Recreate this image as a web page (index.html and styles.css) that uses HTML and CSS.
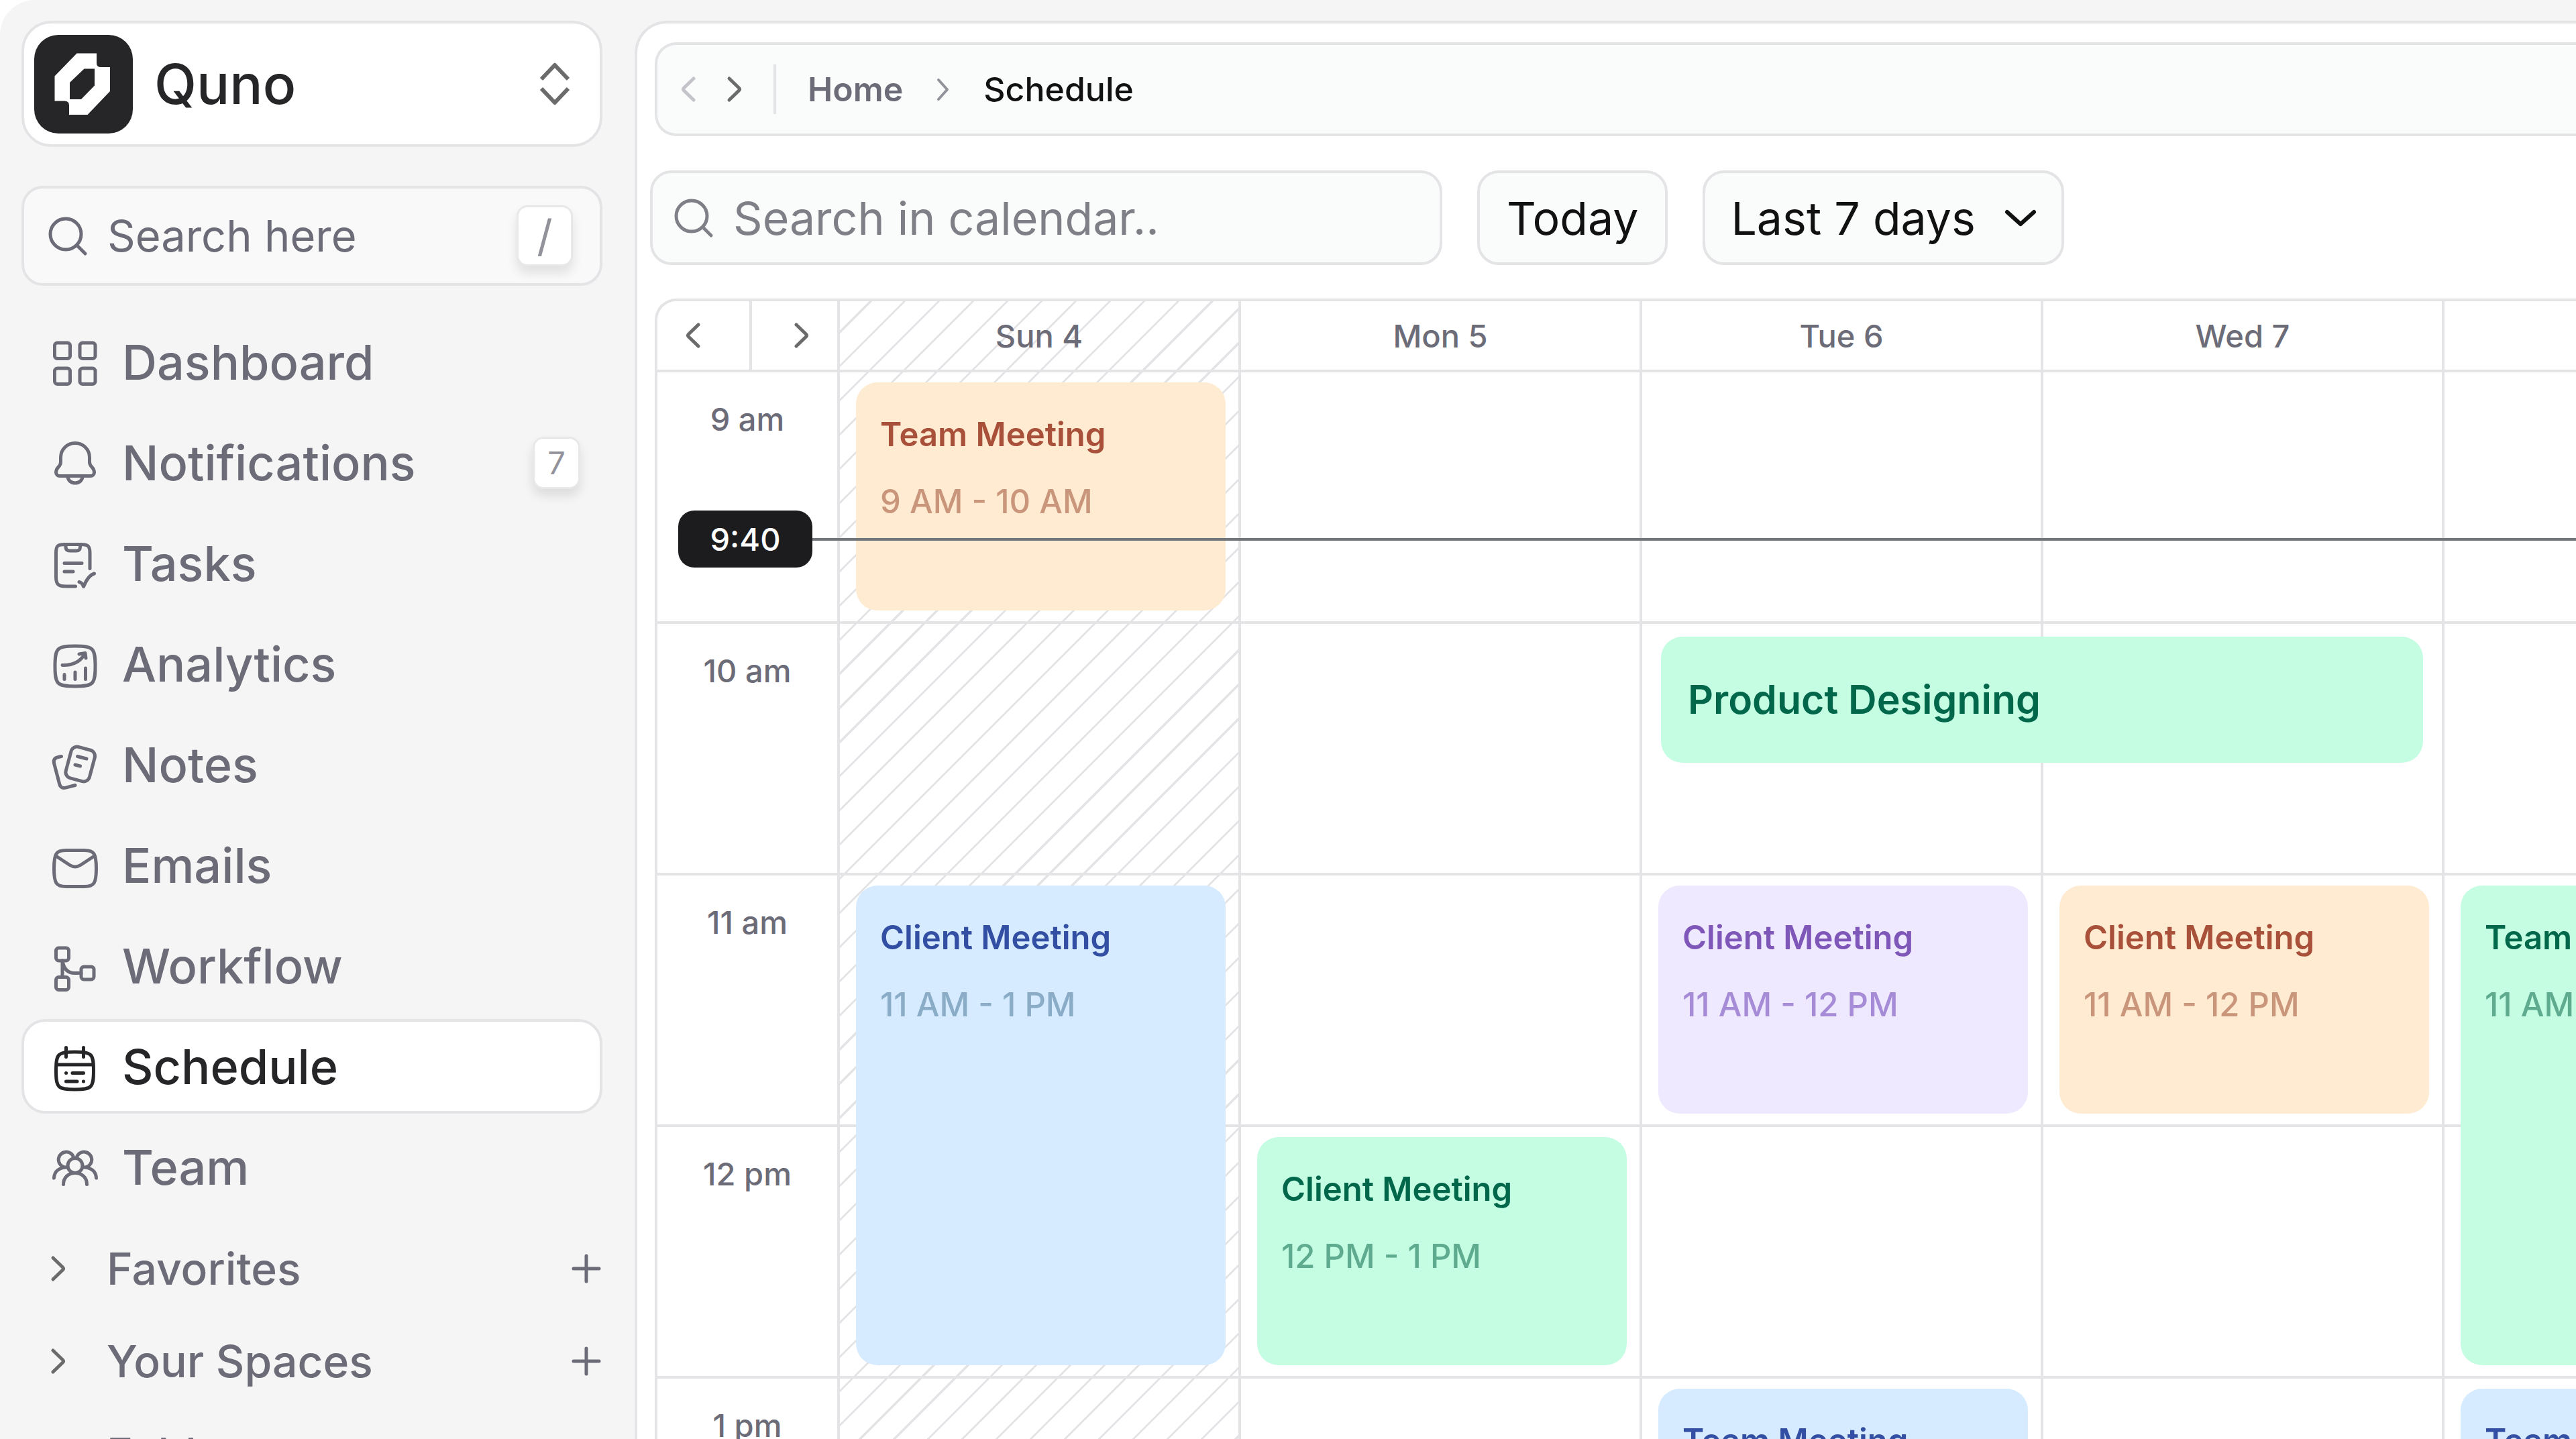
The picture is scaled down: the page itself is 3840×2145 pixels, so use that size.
FILE: index.html
```html
<!DOCTYPE html>
<html lang="en">
<head>
  <meta charset="UTF-8">
  <title>Quno - Schedule</title>
  <link rel="stylesheet" href="styles.css">
</head>
<body>

  <div class="app">

    <aside class="sidebar">
      <button class="workspace" type="button">
        <svg class="logo" viewBox="0 0 147 147">
          <rect width="147" height="147" rx="36" fill="#262628"/>
          <path fill="#fff" fill-rule="evenodd" d="M63.500 27.500H93V42Q93 48 99 48H113V84L79.500 119H52V105Q52 98.500 45.500 98.500H30.500V61.500ZM74.500 50.500L53 71V96H70L90 75.500V50.500Z"/>
        </svg>
        <span class="workspace-name">Quno</span>
        <svg class="updown" viewBox="0 0 46 64"><path d="M3 25L23 4L43 25M3 39L23 60L43 39"/></svg>
      </button>

      <label class="side-search">
        <svg class="search-icon" viewBox="0 0 58 58"><circle cx="26" cy="26" r="23"/><path d="M42.500 42.500L55 55"/></svg>
        <input type="text" placeholder="Search here" aria-label="Search here">
        <kbd>/</kbd>
      </label>

      <nav class="menu">
        <a href="#">
          <svg viewBox="0 0 72 72"><rect x="5.500" y="7" width="23" height="23.500" rx="4"/><rect x="43" y="7" width="23" height="23.500" rx="4"/><rect x="5.500" y="45" width="23" height="23.500" rx="4"/><rect x="43" y="45" width="23" height="23.500" rx="4"/></svg>
          Dashboard
        </a>
        <a href="#">
          <svg viewBox="0 0 72 72"><path d="M36 6.500C24 6.500 14.500 16 14.500 28V35C14.500 42 7.500 42 7.500 50C7.500 53 10 55.500 13 55.500H59C62 55.500 64.500 53 64.500 50C64.500 42 57.500 42 57.500 35V28C57.500 16 48 6.500 36 6.500ZM25 56C25 62 30 66 36 66S47 62 47 56"/></svg>
          Notifications
          <span class="count">7</span>
        </a>
        <a href="#">
          <svg viewBox="0 0 72 72"><path d="M36.500 70H22C11 70 7.500 67 7.500 56V20C7.500 10 10 7.500 20 7.500H45C55 7.500 58 10 58 20V43.500M22 8V11C22 15 24 17 28 17H38C42 17 43.500 15 43.500 11V8M20 35.500H46M20 48H33M42 63.500C45 64 47 66 48.500 70.500C52 62 57 53 64.500 51"/></svg>
          Tasks
        </a>
        <a href="#">
          <svg viewBox="0 0 72 72"><path d="M36 9C9 9 6 12 6 39S9 69 36 69S66 66 66 39S63 9 36 9ZM17 37.500C33 38 44 32 50.500 20.500M42 21L51 19.500L52 27M20 51.500V58.500M36 48V58.500M51.500 42V58.500"/></svg>
          Analytics
        </a>
        <a href="#">
          <svg viewBox="0 0 72 72"><rect x="25.500" y="11" width="36.500" height="48" rx="9" transform="rotate(15 43.700 35)"/><path d="M15.500 23.500L11 24.500C6 25.500 3.500 28.500 4.500 33.500L12.500 64C13.500 69 17 71.500 22 70.200L36 66.500M39.500 23.500L53 27M36 36L43.500 38"/></svg>
          Notes
        </a>
        <a href="#">
          <svg viewBox="0 0 72 72"><path d="M22 13.500H50C64 13.500 67.500 18 67.500 40.500S64 67.500 50 67.500H22C8 67.500 4.500 63 4.500 40.500S8 13.500 22 13.500ZM7.500 22L28 35.500Q36 40.500 44 35.500L64.500 22"/></svg>
          Emails
        </a>
        <a href="#">
          <svg viewBox="0 0 72 72"><rect x="7.500" y="9" width="19" height="19" rx="4"/><rect x="7.500" y="52.500" width="19" height="19" rx="4"/><rect x="45" y="37" width="19" height="19" rx="4"/><path d="M17 28V52.500M17 28C19 40 25 46.500 35 46.500H45"/></svg>
          Workflow
        </a>
        <a href="#" class="active">
          <svg viewBox="0 0 72 72"><path d="M35.500 14C10 14 7.500 17 7.500 42S10 70 35.500 70S63.500 67 63.500 42S61 14 35.500 14ZM8 33H63M22.500 7.500V21.500M48.500 7.500V21.500M22.500 45.500H22.600M32 45.500H48.500M22.500 58H39M48.400 58H48.500"/></svg>
          Schedule
        </a>
        <a href="#">
          <svg viewBox="0 0 72 72"><circle cx="36" cy="33.500" r="11"/><path d="M33.800 21.500A11.500 11.500 0 1 0 24.500 36M38.200 21.500A11.500 11.500 0 1 1 47.500 36M4.500 52C5 42 12 36 25 36M67.500 52C67 42 60 36 47 36M18.500 61.500C18.500 51 26 44.500 36 44.500S53.500 51 53.500 61.500"/></svg>
          Team
        </a>
      </nav>

      <div class="groups">
        <div class="group">
          <button class="group-toggle" type="button"><svg class="chevron" viewBox="0 0 22 38"><path d="M3 3L17.500 17Q19.500 19 17.500 21L3 35"/></svg>Favorites</button>
          <button class="add" type="button" aria-label="Add favorite"><svg viewBox="0 0 44 44"><path d="M22 3V41M3 22H41"/></svg></button>
        </div>
        <div class="group">
          <button class="group-toggle" type="button"><svg class="chevron" viewBox="0 0 22 38"><path d="M3 3L17.500 17Q19.500 19 17.500 21L3 35"/></svg>Your Spaces</button>
          <button class="add" type="button" aria-label="Add space"><svg viewBox="0 0 44 44"><path d="M22 3V41M3 22H41"/></svg></button>
        </div>
        <div class="group">
          <button class="group-toggle" type="button"><svg class="chevron" viewBox="0 0 22 38"><path d="M3 3L17.500 17Q19.500 19 17.500 21L3 35"/></svg>Folders</button>
        </div>
      </div>
    </aside>

    <main class="panel">
      <nav class="breadcrumb">
        <button type="button" aria-label="Back" disabled><svg class="chevron" viewBox="0 0 22 38"><path d="M19 3L4.500 17Q2.500 19 4.500 21L19 35"/></svg></button>
        <button type="button" aria-label="Forward"><svg class="chevron" viewBox="0 0 22 38"><path d="M3 3L17.500 17Q19.500 19 17.500 21L3 35"/></svg></button>
        <span class="divider"></span>
        <a href="#">Home</a>
        <svg class="separator" viewBox="0 0 18 33"><path d="M2 2L15 16.500L2 31"/></svg>
        <span class="current">Schedule</span>
      </nav>

      <div class="toolbar">
        <label class="calendar-search">
          <svg class="search-icon" viewBox="0 0 58 58"><circle cx="26" cy="26" r="23"/><path d="M42.500 42.500L55 55"/></svg>
          <input type="text" placeholder="Search in calendar.." aria-label="Search in calendar">
        </label>
        <button class="today" type="button">Today</button>
        <div class="range">
          <select aria-label="Date range">
            <option>Last 7 days</option>
          </select>
          <svg viewBox="0 0 46 26"><path d="M3 4L23 22L43 4"/></svg>
        </div>
      </div>

      <section class="calendar">
        <div class="cells">
          <div class="pager">
            <button type="button" aria-label="Previous week"><svg class="chevron" viewBox="0 0 22 38"><path d="M19 3L4.500 17Q2.500 19 4.500 21L19 35"/></svg></button>
            <button type="button" aria-label="Next week"><svg class="chevron" viewBox="0 0 22 38"><path d="M3 3L17.500 17Q19.500 19 17.500 21L3 35"/></svg></button>
          </div>
          <div class="day">Sun 4</div>
          <div class="day">Mon 5</div>
          <div class="day">Tue 6</div>
          <div class="day">Wed 7</div>
          <div class="day"></div>

          <div class="hour">9 am</div>
          <div class="slot"></div><div class="slot"></div><div class="slot"></div><div class="slot"></div><div class="slot"></div>
          <div class="hour">10 am</div>
          <div class="slot"></div><div class="slot"></div><div class="slot"></div><div class="slot"></div><div class="slot"></div>
          <div class="hour">11 am</div>
          <div class="slot"></div><div class="slot"></div><div class="slot"></div><div class="slot"></div><div class="slot"></div>
          <div class="hour">12 pm</div>
          <div class="slot"></div><div class="slot"></div><div class="slot"></div><div class="slot"></div><div class="slot"></div>
          <div class="hour">1 pm</div>
          <div class="slot"></div><div class="slot"></div><div class="slot"></div><div class="slot"></div><div class="slot"></div>
        </div>

        <!-- second layer on the same tracks, holds the events -->
        <div class="events">
          <article class="event orange sun h9"><h3>Team Meeting</h3><p>9 AM - 10 AM</p></article>
          <article class="event green wide"><h3>Product Designing</h3></article>
          <article class="event blue sun h11 long"><h3>Client Meeting</h3><p>11 AM - 1 PM</p></article>
          <article class="event purple tue h11"><h3>Client Meeting</h3><p>11 AM - 12 PM</p></article>
          <article class="event orange wed h11"><h3>Client Meeting</h3><p>11 AM - 12 PM</p></article>
          <article class="event green thu h11 long"><h3>Team Meeting</h3><p>11 AM - 1 PM</p></article>
          <article class="event green mon h12"><h3>Client Meeting</h3><p>12 PM - 1 PM</p></article>
          <article class="event blue tue h13"><h3>Team Meeting</h3></article>
          <article class="event blue thu h13"><h3>Team Meeting</h3></article>
        </div>

        <div class="now"><span>9:40</span></div>
      </section>
    </main>

  </div>

</body>
</html>
```
FILE: styles.css
```css
* {
  box-sizing: border-box;
}

html, body {
  margin: 0;
  padding: 0;
  height: 100%;
  overflow: hidden;
  background: #fff;
  font-family: Inter, 'Liberation Sans', sans-serif;
  color: #6c6b78;
}

button, input, select {
  font: inherit;
  color: inherit;
  margin: 0;
  padding: 0;
  border: none;
  background: none;
  outline: none;
}

button {
  cursor: pointer;
}

a {
  color: inherit;
  text-decoration: none;
}

svg {
  flex: none;
  display: block;
  overflow: visible;
  fill: none;
  stroke: currentColor;
  stroke-width: 5;
  stroke-linecap: round;
  stroke-linejoin: round;
}

.app {
  display: flex;
  height: 100%;
  overflow: hidden;
  background: #f5f5f5;
  border-top-left-radius: 52px;
}

.chevron {
  width: 22px;
  height: 38px;
  color: #6b6b6b;
}

.search-icon {
  width: 58px;
  height: 58px;
}

/* Sidebar */
.sidebar {
  flex: none;
  width: 946px;
  padding: 31px 48px 0 32px;
}

.workspace {
  display: flex;
  align-items: center;
  width: 100%;
  height: 188px;
  padding: 0 44px 0 15px;
  background: #fff;
  border: 4px solid #e4e4e6;
  border-radius: 44px;
}

.logo {
  width: 147px;
  height: 147px;
  stroke: none;
}

.workspace-name {
  flex: 1;
  margin-left: 32px;
  text-align: left;
  font-size: 82px;
  font-weight: 500;
  color: #262628;
}

.updown {
  width: 46px;
  height: 64px;
  color: #6b6b6b;
  stroke-width: 6;
  stroke-linecap: butt;
}

.side-search {
  display: flex;
  align-items: center;
  height: 149px;
  margin-top: 58px;
  padding: 0 40px 0 36px;
  background: #f9f9fa;
  border: 4px solid #e4e4e6;
  border-radius: 32px;
}

.side-search input {
  flex: 1;
  min-width: 0;
  margin-left: 30px;
  font-size: 65px;
}

input::placeholder {
  color: inherit;
  opacity: 1;
}

kbd, .count {
  display: flex;
  align-items: center;
  justify-content: center;
  background: #fff;
  border: 3px solid #e8e8ea;
  border-radius: 16px;
  box-shadow: 0 10px 16px rgba(0, 0, 0, 0.1);
  font-family: inherit;
  color: #92929a;
}

kbd {
  width: 84px;
  height: 91px;
  font-size: 65px;
}

.count {
  width: 71px;
  height: 78px;
  margin-left: auto;
  font-size: 47px;
  font-weight: 400;
}

.menu {
  display: flex;
  flex-direction: column;
  gap: 9px;
  margin-top: 43px;
}

.menu a {
  display: flex;
  align-items: center;
  gap: 34px;
  height: 141px;
  padding: 0 29px 0 40px;
  border: 4px solid transparent;
  border-radius: 36px;
  font-size: 72px;
  font-weight: 500;
}

.menu svg {
  width: 72px;
  height: 72px;
}

.menu .active {
  background: #fff;
  border-color: #e4e4e6;
  color: #262628;
}

.groups {
  margin-top: 12px;
}

.group {
  display: flex;
  align-items: center;
  justify-content: space-between;
  height: 138px;
  padding: 0 2px 0 44px;
  font-size: 66px;
  font-weight: 500;
}

.group-toggle {
  display: flex;
  align-items: center;
  gap: 61px;
}

.add svg {
  width: 44px;
  height: 44px;
}

/* Main panel */
.panel {
  flex: 1;
  min-width: 0;
  margin-top: 31px;
  padding: 28px 0 0 19px;
  background: #fff;
  border: 4px solid #e4e4e6;
  border-width: 4px 0 0 4px;
  border-top-left-radius: 48px;
  overflow: hidden;
}

.breadcrumb {
  display: flex;
  align-items: center;
  gap: 47px;
  height: 140px;
  margin-left: 7px;
  padding-left: 35px;
  background: #fafcfb;
  border: 4px solid #e4e4e6;
  border-right: none;
  border-radius: 32px 0 0 32px;
  font-size: 50px;
  font-weight: 600;
}

.breadcrumb button:disabled .chevron {
  color: #c4c3ca;
}

.divider {
  width: 4px;
  height: 74px;
  background: #e4e4e6;
}

.separator {
  width: 18px;
  height: 33px;
  margin: 0 4px;
  color: #92929a;
  stroke-width: 4;
}

.current {
  font-weight: 500;
  color: #111;
}

.toolbar {
  display: flex;
  gap: 52px;
  margin-top: 51px;
  font-size: 68px;
  color: #111;
}

.calendar-search, .today, .range select {
  height: 141px;
  background: #fafcfb;
  border: 4px solid #e4e4e6;
  border-radius: 32px;
}

.calendar-search {
  display: flex;
  align-items: center;
  width: 1181px;
  padding: 0 32px;
  color: #7f8087;
}

.calendar-search input {
  flex: 1;
  min-width: 0;
  margin-left: 30px;
}

.today {
  padding: 0 40px;
}

.range {
  display: grid;
  align-items: center;
}

.range select, .range svg {
  grid-area: 1 / 1;
}

.range select {
  appearance: none;
  padding: 0 128px 0 38px;
}

.range svg {
  justify-self: end;
  width: 46px;
  height: 26px;
  margin-right: 42px;
  pointer-events: none;
  stroke-width: 6;
}

/* Calendar */
.calendar {
  display: grid;
  position: relative;
  margin: 50px 0 0 7px;
  border: 4px solid #e4e4e6;
  border-width: 4px 0 0 4px;
  border-top-left-radius: 32px;
  font-size: 47px;
  font-weight: 500;
}

.cells, .events {
  grid-area: 1 / 1;
  display: grid;
  grid-template-columns: 268px repeat(5, minmax(598px, 1fr));
  grid-template-rows: 102px repeat(5, 375px);
}

/* hatching behind the Sunday column */
.cells {
  background: repeating-linear-gradient(135deg, transparent 0 31px, #e4e4e6 31px 34px, transparent 34px 36px) 272px 0 / 594px 100% no-repeat;
}

.pager {
  display: flex;
}

.pager button {
  display: flex;
  flex: 1;
  align-items: center;
  padding: 0 42px;
}

.pager button:first-child {
  flex: 0 0 137px;
}

.pager button:last-child {
  justify-content: flex-end;
  border-left: 4px solid #e4e4e6;
}

.day {
  display: flex;
  align-items: center;
  justify-content: center;
  border-left: 4px solid #e4e4e6;
}

.hour {
  padding-top: 40px;
  border-top: 4px solid #e4e4e6;
  text-align: center;
  line-height: 60px;
}

.slot {
  border: 4px solid #e4e4e6;
  border-width: 4px 0 0 4px;
}

.event {
  margin: 19px 19px 16px 28px;
  padding: 48px 36px;
  border-radius: 32px;
  line-height: 60px;
  white-space: nowrap;
  overflow: hidden;
}

.event h3, .event p {
  margin: 0;
  font-size: 49px;
}

.event h3 {
  font-weight: 600;
}

.event p {
  margin-top: 40px;
  font-weight: 500;
}

.sun { grid-column: 2; }
.mon { grid-column: 3; }
.tue { grid-column: 4; }
.wed { grid-column: 5; }
.thu { grid-column: 6; }

.h9 { grid-row: 2; }
.h11 { grid-row: 4; }
.h12 { grid-row: 5; }
.h13 { grid-row: 6; }
.h11.long { grid-row: 4 / span 2; }

.wide {
  display: flex;
  align-items: center;
  grid-area: 3 / 4 / auto / span 2;
  align-self: start;
  height: 188px;
  margin: 23px 28px 0 32px;
  padding: 0 40px;
}

.wide h3 {
  font-size: 59px;
}

.orange { background: #ffebd2; color: #a8503a; }
.orange p { color: #c9967c; }
.blue { background: #d6ebff; color: #324fa3; }
.blue p { color: #8aacc7; }
.green { background: #c5fde3; color: #00674b; }
.green p { color: #5fab90; }
.purple { background: #eee9ff; color: #7e57b9; }
.purple p { color: #a68bd6; }

/* current time marker */
.now {
  position: absolute;
  top: 312px;
  left: 31px;
  right: 0;
  display: flex;
  align-items: center;
  color: #fff;
}

.now span {
  width: 200px;
  padding: 12px 0;
  background: #1c1c1e;
  border-radius: 24px;
  line-height: 61px;
  text-align: center;
}

.now::after {
  content: '';
  flex: 1;
  height: 4px;
  background: #72767a;
}
```
